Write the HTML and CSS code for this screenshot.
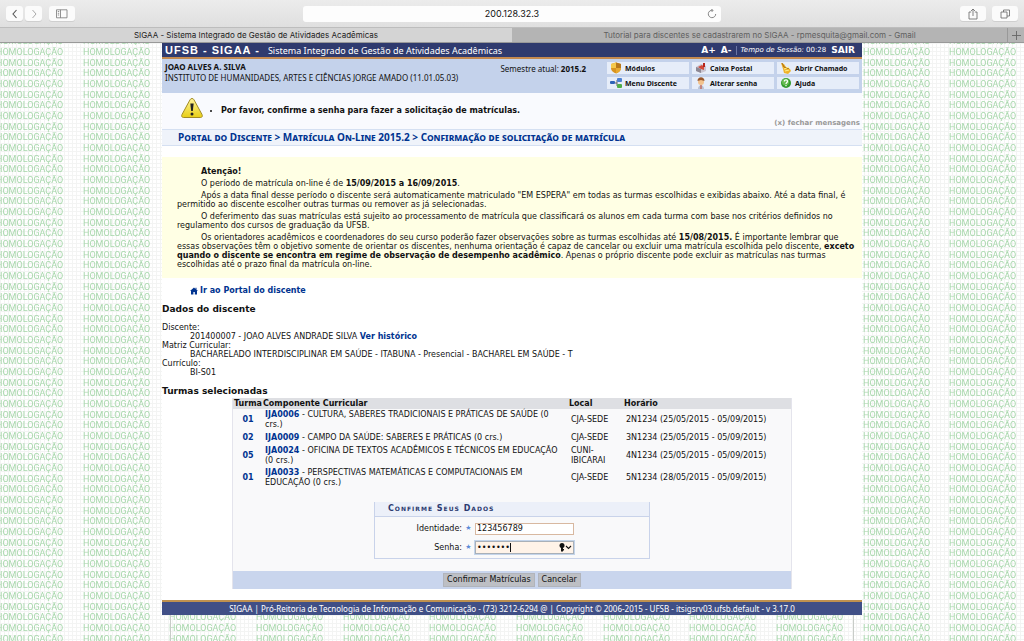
FILE: index.html
```html
<!DOCTYPE html>
<html lang="pt-BR">
<head>
<meta charset="utf-8">
<title>SIGAA - Sistema Integrado de Gestão de Atividades Acadêmicas</title>
<link rel="stylesheet" href="styles.css">
</head>
<body>
<header class="browser">
  <div class="toolbar">
    <div class="tools">
      <div class="pair">
        <button class="tool nav" aria-label="Voltar"><svg width="8" height="10" viewBox="0 0 8 10"><path d="M5.500 1L2 5l3.500 4" fill="none" stroke="#555" stroke-width="1.100"/></svg></button>
        <button class="tool nav" aria-label="Avançar"><svg width="8" height="10" viewBox="0 0 8 10"><path d="M2.500 1L6 5 2.500 9" fill="none" stroke="#aaa" stroke-width="1"/></svg></button>
      </div>
      <button class="tool" aria-label="Barra lateral"><svg width="12" height="10" viewBox="0 0 12 10"><path d="M.5.800h10.500v8H.500zM4.500.800v8M1.800 2.500h1.400M1.800 4.300h1.400M1.800 6h1.400" fill="none" stroke="#777" stroke-width=".8"/></svg></button>
    </div>
    <div class="address"><span>200.128.32.3</span><button class="reload" aria-label="Recarregar"><svg width="10" height="10" viewBox="0 0 10 10"><path d="M8.700 5a3.700 3.700 0 1 1-3.200-3.700M4.300.200l1.800 1.200-1.400 1.500" fill="none" stroke="#777" stroke-width=".9"/></svg></button></div>
    <div class="tools end">
      <button class="tool" aria-label="Compartilhar"><svg width="10" height="12" viewBox="0 0 10 12"><path d="M3.200 4H1v7h8V4H6.800M5 8V1M3 3l2-2 2 2" fill="none" stroke="#666" stroke-width=".8"/></svg></button>
      <button class="tool" aria-label="Abas"><svg width="11" height="10" viewBox="0 0 11 10"><path d="M1 3h6v6H1zM3.500 3V1h6v6H7" fill="none" stroke="#666" stroke-width=".8"/></svg></button>
    </div>
  </div>
  <nav class="tabs">
    <a class="tab current" href="#">SIGAA - Sistema Integrado de Gestão de Atividades Acadêmicas</a>
    <a class="tab" href="#">Tutorial para discentes se cadastrarem no SIGAA - rpmesquita@gmail.com - Gmail</a>
    <button class="newtab" aria-label="Nova aba"><svg width="9" height="9" viewBox="0 0 9 9"><path d="M4.500 0v9M0 4.500h9" stroke="#666" stroke-width=".9"/></svg></button>
  </nav>
</header>

<main class="page">
  <svg class="watermark" aria-hidden="true">
    <defs>
      <pattern id="grid" width="4" height="4" patternUnits="userSpaceOnUse"><path d="M0 .5h4M.5 0v4" stroke="#f3f4f3" stroke-width="1"/></pattern>
      <pattern id="mark" x="-4" y="2" width="260" height="32" patternUnits="userSpaceOnUse">
        <g class="mark">
          <text x="0" y="10">HOMOLOGAÇÃO</text><text x="87" y="10">HOMOLOGAÇÃO</text><text x="173" y="10">HOMOLOGAÇÃO</text>
          <text x="0" y="21">HOMOLOGAÇÃO</text><text x="87" y="21">HOMOLOGAÇÃO</text><text x="173" y="21">HOMOLOGAÇÃO</text>
          <text x="0" y="31">HOMOLOGAÇÃO</text><text x="87" y="31">HOMOLOGAÇÃO</text><text x="173" y="31">HOMOLOGAÇÃO</text>
        </g>
      </pattern>
    </defs>
    <rect width="100%" height="100%" fill="url(#grid)"/>
    <rect width="100%" height="100%" fill="url(#mark)"/>
  </svg>

  <div class="site">
    <div class="topbar">
      <span class="brand">UFSB - SIGAA -</span>
      <span class="system">Sistema Integrado de Gestão de Atividades Acadêmicas</span>
      <a class="zoom" href="#">A+</a>
      <a class="zoom" href="#">A-</a>
      <span class="session"><em>Tempo de Sessão:</em> 00:28</span>
      <a class="exit" href="#">SAIR</a>
    </div>

    <div class="info">
      <div class="user"><strong>JOAO ALVES A. SILVA</strong><br>INSTITUTO DE HUMANIDADES, ARTES E CIÊNCIAS JORGE AMADO (11.01.05.03)</div>
      <div class="term">Semestre atual: <strong>2015.2</strong></div>
      <nav class="menu">
        <a href="#"><svg width="12" height="12" viewBox="0 0 12 12"><path d="M6 .5l5 1.500v4c0 3-2.500 4.500-5 5.500C3.500 10.500 1 9 1 6V2z" fill="#d89420"/><path d="M6 .5l5 1.500v4H6z" fill="#b8781c"/><path d="M1 2l5-1.500V6H1z" fill="#f5c84b"/><path d="M6 6h5c0 3-2.500 4.500-5 5.500z" fill="#e8a930"/></svg>Módulos</a>
        <a href="#"><svg width="12" height="12" viewBox="0 0 12 12"><path d="M1 5l5-3 5 2v5l-5 2-5-2z" fill="#c9c4d0"/><path d="M1 5l5 2v4L1 9z" fill="#8c8894"/><path d="M3 5l4-2 2 2v3l-3-1z" fill="#d24b3a"/><path d="M8 1h2v4H8z" fill="#b6261c"/></svg>Caixa Postal</a>
        <a href="#"><svg width="12" height="12" viewBox="0 0 12 12"><path d="M1 1l3 1 2 3 4 2 1 2-3 3-4-1-1-4z" fill="#efb32b"/><path d="M2 1l2 4 5 2" fill="none" stroke="#a96c13"/><path d="M4 7l5-2M5 9l4-1" stroke="#fff08a"/></svg>Abrir Chamado</a>
        <a href="#"><svg width="12" height="12" viewBox="0 0 12 12"><path d="M5 6h2M7 3v6M7 3h2M7 9h2" stroke="#666" fill="none"/><rect x="0" y="4" width="5" height="3" rx="1" fill="#2d62b8"/><rect x="7" y="1" width="5" height="4" rx="1" fill="#4d82d4"/><rect x="7" y="7" width="5" height="4" rx="1" fill="#50ad48"/></svg>Menu Discente</a>
        <a href="#"><svg width="12" height="12" viewBox="0 0 12 12"><path d="M3 12c0-5 6-5 6 0z" fill="#b9c3d4"/><circle cx="6" cy="5" r="3" fill="#f2c28d"/><path d="M2.500 4c0-5 7-5 7 0l-3.500-1z" fill="#98562a"/><path d="M5.500 8h1v4h-1z" fill="#c9452b"/></svg>Alterar senha</a>
        <a href="#"><svg width="12" height="12" viewBox="0 0 12 12"><circle cx="6" cy="6" r="5" fill="#339a2d"/><circle cx="5.500" cy="5" r="3.500" fill="#66bd52"/><path d="M4.300 4.500c0-2.500 3.600-2 3.200 0C7.200 5.600 6 5.500 6 7M6 8v1.300" fill="none" stroke="#fff" stroke-width="1.200"/></svg>Ajuda</a>
      </nav>
    </div>

    <section class="notice">
      <svg width="24" height="22" viewBox="0 0 24 22"><defs><linearGradient id="sun" x2="0" y2="1"><stop stop-color="#fff39a"/><stop offset="1" stop-color="#e8cf16"/></linearGradient></defs><path d="M12 1.500c1 0 1.500.5 2 1.300l8 14.700c.8 1.500.2 3-1.500 3h-17c-1.700 0-2.300-1.500-1.500-3l8-14.700c.5-.8 1-1.300 2-1.300z" fill="url(#sun)" stroke="#a18b26"/><path d="M10.300 6.500h3.400l-.9 7.500h-1.600z" fill="#222"/><circle cx="12" cy="17" r="1.500" fill="#222"/></svg>
      <ul><li>Por favor, confirme a senha para fazer a solicitação de matrículas.</li></ul>
      <button class="dismiss">(x) fechar mensagens</button>
    </section>

    <h2 class="crumbs"><a href="#">Portal do Discente</a> &gt; Matrícula On-Line 2015.2 &gt; Confirmação de solicitação de matrícula</h2>

    <section class="warning">
      <p><strong>Atenção!</strong></p>
      <p>O período de matrícula on-line é de <strong>15/09/2015 a 16/09/2015</strong>.</p>
      <p>Após a data final desse período o discente será automaticamente matriculado "EM ESPERA" em todas as turmas escolhidas e exibidas abaixo. Até a data final, é permitido ao discente escolher outras turmas ou remover as já selecionadas.</p>
      <p>O deferimento das suas matrículas está sujeito ao processamento de matrícula que classificará os alunos em cada turma com base nos critérios definidos no regulamento dos cursos de graduação da UFSB.</p>
      <p>Os orientadores acadêmicos e coordenadores do seu curso poderão fazer observações sobre as turmas escolhidas até <strong>15/08/2015.</strong> É importante lembrar que essas observações têm o objetivo somente de orientar os discentes, nenhuma orientação é capaz de cancelar ou excluir uma matrícula escolhida pelo discente, <strong>exceto quando o discente se encontra em regime de observação de desempenho acadêmico</strong>. Apenas o próprio discente pode excluir as matrículas nas turmas escolhidas até o prazo final da matrícula on-line.</p>
    </section>

    <a class="home" href="#"><svg width="8" height="8" viewBox="0 0 8 8"><path d="M0 4l4-3.500L5.500 2V.800h1v2L8 4H7v3.500H4.800V5H3.400v2.500H1V4z" fill="#003390"/></svg>Ir ao Portal do discente</a>

    <h3>Dados do discente</h3>
    <dl>
      <dt>Discente:</dt><dd>201400007 - JOAO ALVES ANDRADE SILVA <a href="#">Ver histórico</a></dd>
      <dt>Matriz Curricular:</dt><dd>BACHARELADO INTERDISCIPLINAR EM SAÚDE - ITABUNA - Presencial - BACHAREL EM SAÚDE - T</dd>
      <dt>Currículo:</dt><dd>BI-S01</dd>
    </dl>

    <h3>Turmas selecionadas</h3>
    <form class="enroll">
      <table class="classes">
        <colgroup><col class="c-class"><col class="c-name"><col class="c-place"><col></colgroup>
        <thead><tr><th>Turma</th><th>Componente Curricular</th><th>Local</th><th>Horário</th></tr></thead>
        <tbody>
          <tr><td>01</td><td><a href="#">IJA0006</a> - CULTURA, SABERES TRADICIONAIS E PRÁTICAS DE SAÚDE (0 crs.)</td><td>CJA-SEDE</td><td>2N1234 (25/05/2015 - 05/09/2015)</td></tr>
          <tr><td>02</td><td><a href="#">IJA0009</a> - CAMPO DA SAÚDE: SABERES E PRÁTICAS (0 crs.)</td><td>CJA-SEDE</td><td>3N1234 (25/05/2015 - 05/09/2015)</td></tr>
          <tr><td>05</td><td><a href="#">IJA0024</a> - OFICINA DE TEXTOS ACADÊMICOS E TÉCNICOS EM EDUCAÇÃO (0 crs.)</td><td>CUNI-IBICARAI</td><td>4N1234 (25/05/2015 - 05/09/2015)</td></tr>
          <tr><td>01</td><td><a href="#">IJA0033</a> - PERSPECTIVAS MATEMÁTICAS E COMPUTACIONAIS EM EDUCAÇÃO (0 crs.)</td><td>CJA-SEDE</td><td>5N1234 (28/05/2015 - 05/09/2015)</td></tr>
        </tbody>
      </table>
      <div class="confirm">
        <h4>Confirme Seus Dados</h4>
        <div class="field"><label for="ident">Identidade:</label><span class="star">★</span><input id="ident" type="text" value="123456789"></div>
        <div class="field"><label for="pass">Senha:</label><span class="star">★</span><span class="secret"><input id="pass" type="password" value="1234567"><i class="caret"></i><svg width="13" height="9" viewBox="0 0 13 9"><circle cx="3" cy="2.500" r="2.500" fill="#111"/><path d="M2 4h2v4.500H2zM4 6h1v1.500H4z" fill="#111"/><path d="M7 3l2.500 2.500L12 3" fill="none" stroke="#111" stroke-width="1.100"/></svg></span></div>
      </div>
      <div class="actions"><button type="button">Confirmar Matrículas</button><button type="button">Cancelar</button></div>
    </form>

    <footer>SIGAA | Pró-Reitoria de Tecnologia de Informação e Comunicação - (73) 3212-6294 @ | Copyright © 2006-2015 - UFSB - itsigsrv03.ufsb.default - v 3.17.0</footer>
  </div>
  <div class="shade"></div>
</main>
</body>
</html>
```

FILE: styles.css
```css
* { box-sizing: border-box; }
html, body { height: 100%; }
body {
  margin: 0;
  display: flex;
  flex-direction: column;
  overflow: hidden;
  background: #fff;
  color: #111;
  font: 8px/9px Verdana, "DejaVu Sans", sans-serif;
}
a { color: inherit; text-decoration: none; }
button { font: inherit; color: inherit; border: 0; padding: 0; background: none; }
svg { flex: none; display: block; }

/* Browser frame */
.browser { flex: none; font: 8px/10px Inter, sans-serif; }
.toolbar {
  display: grid;
  grid-template-columns: 1fr 418px 1fr;
  align-items: center;
  height: 27px;
  padding: 0 6px;
  background: linear-gradient(#ececec, #dfdfdf);
}
.tools { display: flex; align-items: center; gap: 7px; }
.tools.end { justify-content: flex-end; gap: 6px; }
.pair { display: flex; gap: 2px; }
.tool {
  display: flex;
  align-items: center;
  justify-content: center;
  width: 26px;
  height: 15px;
  border-radius: 3px;
  background: #fbfbfb;
  box-shadow: 0 1px 0 #cfcfcf;
}
.tool.nav { width: 17px; }
.address {
  display: flex;
  align-items: center;
  height: 16px;
  padding: 0 4px 0 14px;
  border-radius: 3px;
  background: #fdfdfd;
  font-size: 9px;
}
.address span { flex: 1; text-align: center; }
.tabs { display: flex; height: 16px; background: #b4b4b4; color: #606060; border-top: 1px solid #bdbdbd; border-bottom: 1px solid #999; }
.tab { flex: 1; display: flex; align-items: center; justify-content: center; overflow: hidden; white-space: nowrap; }
.tab.current { flex: 0 0 50%; background: #d4d4d4; color: #222; }
.newtab { width: 17px; display: flex; align-items: center; justify-content: center; border-left: 1px solid #999; }

/* Page */
.page { position: relative; flex: 1; overflow: hidden; }
.watermark { position: absolute; inset: 0; width: 100%; height: 100%; }
.mark { font: 9px Roboto, sans-serif; fill: #a8d8ac; }
.site { position: relative; max-width: 700px; margin: 0 auto; background: #fff; }
.shade { position: relative; max-width: 684px; height: 40px; margin: 0 auto; border: solid #c8ccc8; border-width: 0 1px; }

.topbar {
  display: flex;
  align-items: center;
  height: 16px;
  padding: 0 7px 0 3px;
  border-bottom: 2px solid #c58a50;
  background: #2f3a6e;
  color: #fff;
  white-space: nowrap;
}
.brand { font: bold 11px/13px "Liberation Sans", sans-serif; letter-spacing: 1px; margin-right: 8px; }
.system { flex: 1; font: 9px/13px "Noto Sans", sans-serif; }
.zoom { font-weight: bold; font-size: 9px; margin-right: 5px; }
.session { border-left: 1px solid #6b76a5; margin-right: 5px; padding-left: 3px; font-size: 7px; }
.exit { font-weight: bold; font-size: 9px; }

.info { display: grid; grid-template-columns: 1fr auto 255px; height: 34px; background: #c4d2eb; font-family: "Noto Sans", sans-serif; }
.user { padding: 2px 3px; line-height: 11px; }
.term { padding: 5px 21px 0 0; }
.menu { display: grid; grid-template-columns: repeat(3, 1fr); gap: 3px; padding: 3px 3px 4px 0; }
.menu a {
  display: flex;
  align-items: center;
  gap: 3px;
  padding-left: 3px;
  background: #e6edf9;
  font-size: 7px;
  font-weight: bold;
  white-space: nowrap;
}

.notice { display: flex; align-items: flex-start; height: 36px; padding: 4px 2px 0 18px; background: #f9fafe; font-weight: bold; }
.notice ul { flex: 1; margin: 9px 0 0; padding-left: 17px; }
.dismiss { margin-top: 22px; color: #999; font-weight: bold; font-size: 7px; }

.crumbs {
  margin: 0 0 11px;
  padding: 1px 16px;
  border: solid #d5e0f2;
  border-width: 1px 0;
  background: #eff3fa;
  color: #003390;
  font: bold 10px/13px "Noto Sans", sans-serif;
  font-variant: small-caps;
}

.warning { padding: 10px 4px 6px 15px; background: #ffffe4; }
.warning p { margin: 0 0 3px; text-indent: 24px; }

.home { display: flex; gap: 2px; align-items: center; margin: 8px 0 8px 28px; color: #003390; font-weight: bold; }
h3 { margin: 0 0 1px; font-size: 9px; line-height: 12px; }
dl { margin: 8px 0; }
dd { margin: 0 0 0 28px; }
dd a { color: #003390; font-weight: bold; }

/* Enrolment form */
.enroll { width: 80%; margin: 0 auto 11px; border: solid #e4e4ec; border-width: 0 1px; background: #f9f9fa; }
.classes { width: 100%; table-layout: fixed; border-collapse: collapse; }
.c-class { width: 30px; }
.c-name { width: 306px; }
.c-place { width: 55px; }
.classes th { padding: 1px 0; text-align: left; background: #dedfe3; white-space: nowrap; }
.classes td { padding: 1px 2px; height: 14px; line-height: 10px; }
.classes th:first-child { padding-left: 1px; }
.classes td:first-child { text-align: center; }
.classes td:first-child, .classes td a { color: #003390; font-weight: bold; }
.confirm { width: 276px; margin: 13px auto 12px; border: solid #c9d3ea; border-width: 0 1px 1px; padding-bottom: 1px; }
.confirm h4 {
  margin: 0 0 2px;
  padding: 1px 13px;
  border-bottom: 1px solid #c9d3ea;
  background: #ecf0f9;
  color: #2b3a70;
  font-size: 8px;
  line-height: 12px;
  font-variant: small-caps;
  letter-spacing: 1px;
}
.field { display: grid; grid-template-columns: 87px 9px 99px; align-items: center; gap: 2px; height: 19px; }
.field label { text-align: right; }
.star { color: #5b8ad6; font-size: 7px; text-align: center; }
.field input { width: 100%; height: 12px; padding: 0 1px; border: 1px solid #d8b8a0; background: #fff; color: #111; font: inherit; outline: 0; }
.secret { position: relative; display: block; }
.field .secret input { display: block; height: 13px; border-color: #a9b0b8; background: #fff3e8; box-shadow: 0 0 0 1px #c3d4ea; }
.secret svg { position: absolute; right: 2px; top: 2px; }
.caret { position: absolute; left: 35px; top: 2px; width: 1px; height: 9px; background: #111; }
.actions { display: flex; justify-content: center; gap: 3px; padding: 2px; background: #c9d5ed; }
.actions button { padding: 0 3px; border: 1px solid #b1b4bb; background: #bdbfc4; line-height: 12px; }

footer {
  padding: 2px 0;
  border-top: 2px solid #bf914f;
  background: #404f86;
  color: #fff;
  font-family: "Noto Sans", sans-serif;
  text-align: center;
  white-space: nowrap;
}
```
